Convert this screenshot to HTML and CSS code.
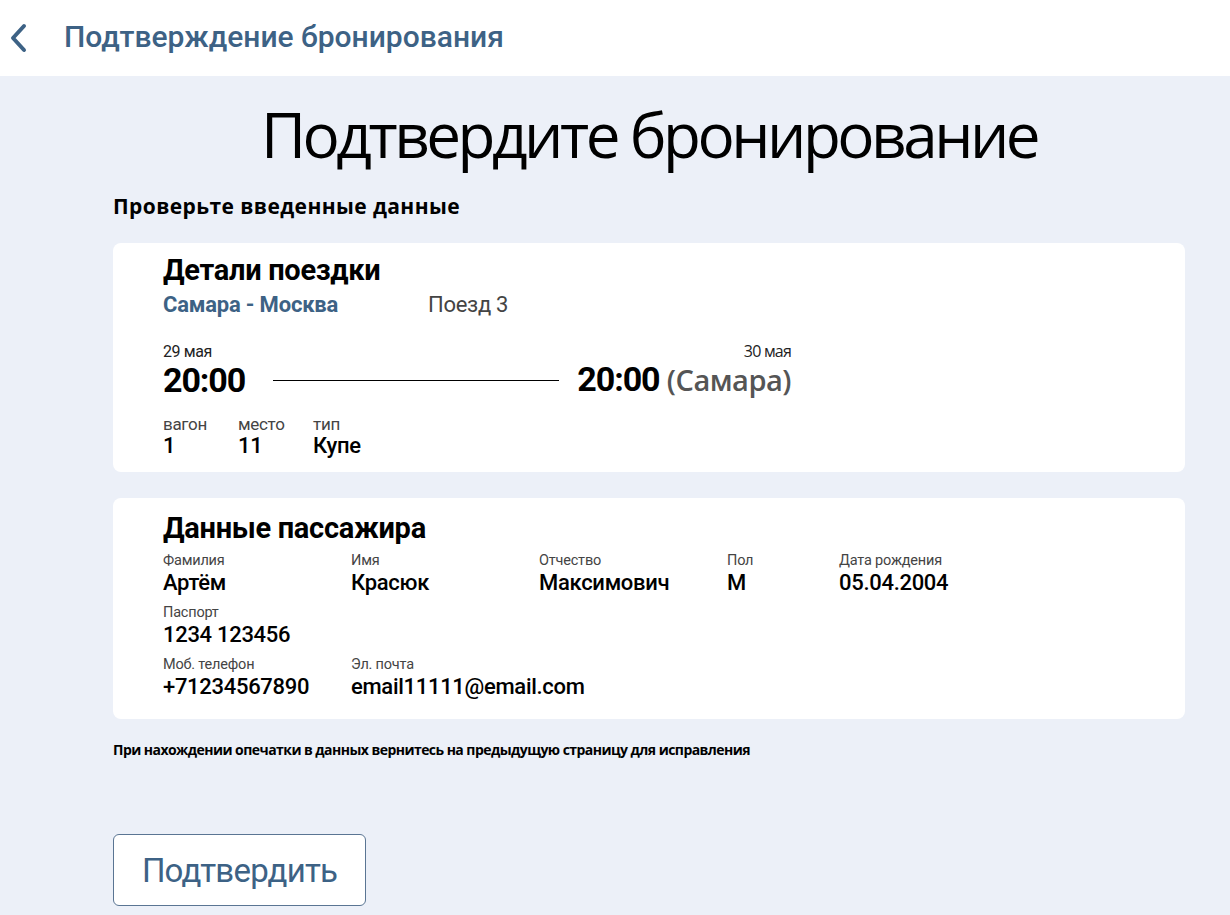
FILE: index.html
```html
<!DOCTYPE html>
<html lang="ru">
<head>
<meta charset="utf-8">
<title>Подтверждение бронирования</title>
<link rel="stylesheet" href="styles.css">
</head>
<body>
<header class="topbar">
  <svg class="back" width="20" height="30" viewBox="0 0 20 30"><path d="M16 3 L5 15 L16 27" fill="none" stroke="#3d6285" stroke-width="4" stroke-linecap="round" stroke-linejoin="round"/></svg>
  <span class="topbar-title">Подтверждение бронирования</span>
</header>
<main class="content">
  <h1 class="title">Подтвердите бронирование</h1>
  <p class="subtitle">Проверьте введенные данные</p>

  <section class="card trip">
    <h2 class="card-title">Детали поездки</h2>
    <div class="route-row">
      <span class="route">Самара - Москва</span>
      <span class="train">Поезд 3</span>
    </div>
    <div class="times">
      <div class="time-block">
        <div class="date">29 мая</div>
        <div class="time">20:00</div>
      </div>
      <div class="line"></div>
      <div class="time-block right">
        <div class="date alt">30 мая</div>
        <div class="time">20:00 <span class="city">(Самара)</span></div>
      </div>
    </div>
    <div class="seat-row">
      <div class="seat"><div class="seat-label">вагон</div><div class="seat-value">1</div></div>
      <div class="seat"><div class="seat-label">место</div><div class="seat-value">11</div></div>
      <div class="seat"><div class="seat-label">тип</div><div class="seat-value">Купе</div></div>
    </div>
  </section>

  <section class="card passenger">
    <h2 class="card-title">Данные пассажира</h2>
    <div class="fields row1">
      <div class="field"><div class="f-label">Фамилия</div><div class="f-value">Артём</div></div>
      <div class="field"><div class="f-label">Имя</div><div class="f-value">Красюк</div></div>
      <div class="field"><div class="f-label">Отчество</div><div class="f-value">Максимович</div></div>
      <div class="field"><div class="f-label">Пол</div><div class="f-value">М</div></div>
      <div class="field"><div class="f-label">Дата рождения</div><div class="f-value">05.04.2004</div></div>
    </div>
    <div class="fields">
      <div class="field"><div class="f-label">Паспорт</div><div class="f-value">1234 123456</div></div>
    </div>
    <div class="fields">
      <div class="field"><div class="f-label">Моб. телефон</div><div class="f-value">+71234567890</div></div>
      <div class="field"><div class="f-label">Эл. почта</div><div class="f-value">email11111@email.com</div></div>
    </div>
  </section>

  <p class="note">При нахождении опечатки в данных вернитесь на предыдущую страницу для исправления</p>

  <button class="confirm">Подтвердить</button>
</main>
</body>
</html>
```
FILE: styles.css
```css
* { box-sizing: border-box; }
html, body { margin: 0; padding: 0; }
body {
  background: #ecf0f8;
  font-family: Roboto, "Liberation Sans", sans-serif;
  color: #000;
  min-height: 915px;
}
.topbar {
  background: #fff;
  height: 76px;
  display: flex;
  align-items: center;
  padding-left: 8px;
}
.back { display: block; margin-top: -1px; }
.topbar-title {
  margin-left: 36px;
  font-size: 30px;
  font-weight: 500;
  color: #3d6285;
  letter-spacing: 0;
  margin-top: -4px;
}
.content {
  width: 1072px;
  margin-left: 113px;
  display: flex;
  flex-direction: column;
}
.title {
  margin: 22px 0 0;
  text-align: center;
  font-family: "Open Sans", sans-serif;
  font-weight: 400;
  font-size: 62px;
  line-height: 72px;
  letter-spacing: -3.5px;
}
.subtitle {
  margin: 23px 0 0;
  font-family: "Open Sans", sans-serif;
  font-weight: 700;
  font-size: 21px;
  line-height: 26px;
  letter-spacing: 0.4px;
}
.card {
  background: #fff;
  border-radius: 8px;
  padding: 11px 50px 12px;
}
.trip { margin-top: 24px; height: 229px; }
.passenger { margin-top: 26px; height: 221px; padding-top: 14px; }
.card-title {
  margin: 0;
  font-size: 29px;
  font-weight: 700;
  line-height: 32px;
  letter-spacing: -0.3px;
}
.route-row { display: flex; margin-top: 6px; line-height: 26px; }
.route {
  width: 265px;
  color: #3d6285;
  font-weight: 700;
  font-size: 22px;
  letter-spacing: -0.2px;
}
.train { color: #444; font-size: 22px; letter-spacing: -0.3px; }
.times { display: flex; align-items: flex-end; margin-top: 24px; width: 628px; }
.time-block { display: flex; flex-direction: column; }
.time-block.right { align-items: flex-end; }
.date { font-size: 16px; line-height: 18px; color: #222; letter-spacing: -0.4px; }
.date.alt { font-family: "Open Sans", sans-serif; font-size: 16px; letter-spacing: -0.8px; }
.time { font-size: 34px; font-weight: 700; line-height: 38px; letter-spacing: -1.1px; }
.city { font-family: "Open Sans", sans-serif; font-weight: 600; font-size: 29px; color: #555; letter-spacing: -0.5px; }
.line { flex: 1; height: 1px; background: #000; margin: 0 18px 18px 28px; }
.seat-row { display: flex; margin-top: 15px; }
.seat { width: 75px; }
.seat-label { font-size: 17px; line-height: 20px; color: #444; letter-spacing: -0.3px; }
.seat-value { font-size: 22px; line-height: 24px; font-weight: 500; letter-spacing: -0.3px; }
.fields { display: flex; margin-top: 8px; }
.fields.row1 { margin-top: 9px; }
.field { width: 188px; }
.row1 .field:nth-child(4) { width: 112px; }
.f-label { font-size: 14.5px; line-height: 16px; color: #444; letter-spacing: -0.2px; }
.f-value { font-size: 22px; line-height: 28px; font-weight: 500; letter-spacing: -0.3px; }
.note {
  margin: 22px 0 0;
  font-family: "Open Sans", sans-serif;
  font-weight: 700;
  font-size: 14px;
  line-height: 18px;
  letter-spacing: -0.55px;
}
.confirm {
  margin-top: 75px;
  width: 253px;
  height: 72px;
  background: #fff;
  border: 1px solid #5a7593;
  border-radius: 6px;
  color: #3d6285;
  font-family: Roboto, sans-serif;
  font-size: 33px;
  letter-spacing: -0.8px;
  align-self: flex-start;
  padding: 0;
}
```
